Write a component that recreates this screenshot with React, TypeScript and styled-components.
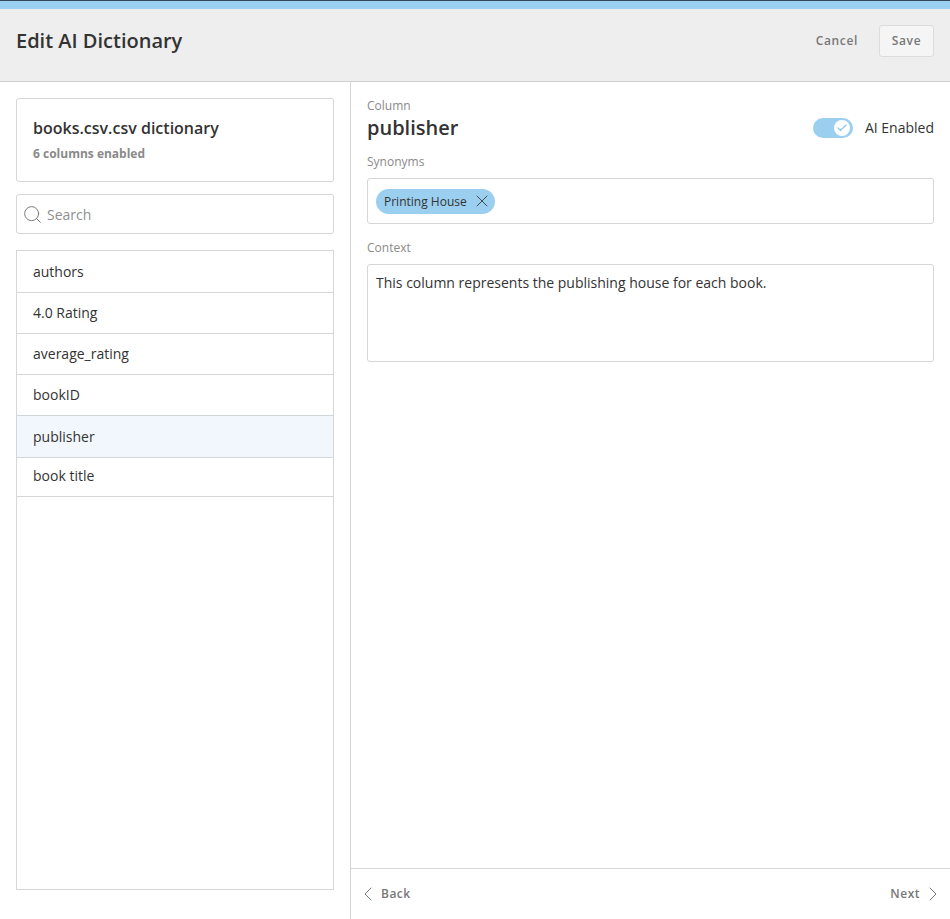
import { Check, ChevronLeft, ChevronRight, Search, X } from "lucide-react";
import styled, { createGlobalStyle } from "styled-components";

const GlobalStyle = createGlobalStyle`
  html, body {
    margin: 0;
    padding: 0;
    background: #ffffff;
  }
  * {
    box-sizing: border-box;
  }
`;

const Page = styled.div`
  width: 950px;
  height: 919px;
  display: flex;
  flex-direction: column;
  font-family: "Open Sans", sans-serif;
  color: #2d2d2d;
  overflow: hidden;
`;

const TopStrip = styled.div`
  height: 9px;
  flex: none;
  background: #9bcfef;
  border-top: 1px solid #33475b;
`;

const Header = styled.header`
  height: 73px;
  flex: none;
  display: flex;
  align-items: center;
  justify-content: space-between;
  padding: 0 16px 8px;
  background: #eeeeee;
  border-bottom: 1px solid #cfcfcf;
`;

const Title = styled.h1`
  margin: 0 0 2px;
  font-size: 20px;
  font-weight: 600;
  line-height: 27px;
  color: #333333;
`;

const HeaderActions = styled.div`
  display: flex;
  align-items: center;
  gap: 21px;
`;

const TextButton = styled.span`
  margin-bottom: 2px;
  font-size: 12px;
  font-weight: 600;
  letter-spacing: 0.65px;
  color: #787878;
`;

const SaveButton = styled.button`
  width: 55px;
  height: 32px;
  padding: 0 0 2px;
  font-family: inherit;
  font-size: 12px;
  font-weight: 600;
  letter-spacing: 0.65px;
  color: #787878;
  background: #f5f5f5;
  border: 1px solid #dcdcdc;
  border-radius: 3px;
`;

const Body = styled.div`
  flex: 1;
  min-height: 0;
  display: flex;
`;

const Sidebar = styled.aside`
  width: 351px;
  flex: none;
  display: flex;
  flex-direction: column;
  padding: 16px 16px 29px;
  border-right: 1px solid #d4d4d4;
`;

const SummaryCard = styled.div`
  width: 318px;
  height: 84px;
  flex: none;
  padding: 18px 16px 0;
  border: 1px solid #d6d6d6;
  border-radius: 3px;
`;

const SummaryTitle = styled.div`
  font-size: 16px;
  font-weight: 600;
  line-height: 22px;
  color: #333333;
`;

const SummaryCount = styled.div`
  margin-top: 7px;
  font-size: 12px;
  font-weight: 700;
  line-height: 16px;
  color: #8a8a8a;
`;

const SearchBox = styled.div`
  width: 318px;
  height: 40px;
  flex: none;
  margin-top: 12px;
  display: flex;
  align-items: center;
  gap: 4px;
  padding-left: 5px;
  border: 1px solid #d6d6d6;
  border-radius: 3px;
  font-size: 14px;
  color: #8f8f8f;
  svg {
    color: #777777;
  }
`;

const ColumnList = styled.ul`
  width: 318px;
  flex: 1;
  margin: 16px 0 0;
  padding: 0;
  list-style: none;
  border: 1px solid #d6d6d6;
  border-top: none;
`;

const ColumnRow = styled.li<{ $active?: boolean; $height: number; $lift: number }>`
  height: ${(p) => p.$height}px;
  display: flex;
  align-items: center;
  padding: 0 0 ${(p) => p.$lift}px 16px;
  font-size: 14px;
  color: #333333;
  border-top: ${(p) => (p.$active ? "1px solid #d0d5da" : "1px solid #d6d6d6")};
  background: ${(p) => (p.$active ? "#f2f7fd" : "#ffffff")};
  &:last-child {
    border-bottom: 1px solid #d6d6d6;
  }
`;

const Detail = styled.main`
  flex: 1;
  min-width: 0;
  display: flex;
  flex-direction: column;
`;

const DetailContent = styled.div`
  flex: 1;
  padding: 16px 16px 0;
`;

const FieldLabel = styled.div`
  font-size: 12px;
  line-height: 16px;
  color: #8a8a8a;
`;

const ColumnHead = styled.div`
  display: flex;
  align-items: center;
  justify-content: space-between;
  height: 28px;
  margin-bottom: 12px;
`;

const ColumnName = styled.div`
  font-size: 20px;
  font-weight: 600;
  line-height: 28px;
  color: #333333;
`;

const ToggleWrap = styled.div`
  display: flex;
  align-items: center;
  gap: 12px;
  font-size: 14px;
  line-height: 18px;
  color: #333333;
`;

const Toggle = styled.div`
  width: 40px;
  height: 20px;
  display: flex;
  align-items: center;
  justify-content: flex-end;
  padding-right: 3px;
  background: #9bcfef;
  border-radius: 10px;
`;

const ToggleKnob = styled.div`
  width: 16px;
  height: 16px;
  display: flex;
  align-items: center;
  justify-content: center;
  background: #ffffff;
  border-radius: 50%;
  color: #8fc8ee;
`;

const SynonymBox = styled.div`
  height: 46px;
  margin: 8px 0 16px;
  display: flex;
  align-items: center;
  padding-left: 8px;
  border: 1px solid #d6d6d6;
  border-radius: 3px;
`;

const Chip = styled.span`
  width: 119px;
  height: 25px;
  display: flex;
  align-items: center;
  gap: 5px;
  padding: 0 0 0 8px;
  background: #9bcfef;
  border-radius: 13px;
  font-size: 12px;
  color: #333333;
`;

const ContextBox = styled.div`
  height: 98px;
  margin-top: 8px;
  padding: 8px;
  border: 1px solid #d6d6d6;
  border-radius: 3px;
  font-size: 14px;
  line-height: 20px;
  color: #333333;
`;

const Footer = styled.footer`
  height: 51px;
  flex: none;
  display: flex;
  align-items: center;
  justify-content: space-between;
  padding: 0 5px;
  border-top: 1px solid #d6d6d6;
`;

const NavButton = styled.span`
  display: flex;
  align-items: center;
  gap: 1px;
  font-size: 12px;
  font-weight: 600;
  letter-spacing: 0.5px;
  color: #787878;
  svg {
    color: #777777;
  }
`;

const NavLabel = styled.span`
  margin-bottom: 2px;
`;

const columns = [
  { name: "authors", height: 42, lift: 0 },
  { name: "4.0 Rating", height: 41, lift: 1 },
  { name: "average_rating", height: 41, lift: 1 },
  { name: "bookID", height: 41, lift: 1 },
  { name: "publisher", height: 42, lift: 0, active: true },
  { name: "book title", height: 40, lift: 3 },
];

export default function App() {
  return (
    <Page>
      <GlobalStyle />
      <TopStrip />
      <Header>
        <Title>Edit AI Dictionary</Title>
        <HeaderActions>
          <TextButton>Cancel</TextButton>
          <SaveButton>Save</SaveButton>
        </HeaderActions>
      </Header>
      <Body>
        <Sidebar>
          <SummaryCard>
            <SummaryTitle>books.csv.csv dictionary</SummaryTitle>
            <SummaryCount>6 columns enabled</SummaryCount>
          </SummaryCard>
          <SearchBox>
            <Search size={21} strokeWidth={1.1} />
            Search
          </SearchBox>
          <ColumnList>
            {columns.map((c) => (
              <ColumnRow key={c.name} $active={c.active} $height={c.height} $lift={c.lift}>
                {c.name}
              </ColumnRow>
            ))}
          </ColumnList>
        </Sidebar>
        <Detail>
          <DetailContent>
            <FieldLabel>Column</FieldLabel>
            <ColumnHead>
              <ColumnName>publisher</ColumnName>
              <ToggleWrap>
                <Toggle>
                  <ToggleKnob>
                    <Check size={12} strokeWidth={2.5} />
                  </ToggleKnob>
                </Toggle>
                AI Enabled
              </ToggleWrap>
            </ColumnHead>
            <FieldLabel>Synonyms</FieldLabel>
            <SynonymBox>
              <Chip>
                Printing House
                <X size={20} strokeWidth={1} />
              </Chip>
            </SynonymBox>
            <FieldLabel>Context</FieldLabel>
            <ContextBox>This column represents the publishing house for each book.</ContextBox>
          </DetailContent>
          <Footer>
            <NavButton>
              <ChevronLeft size={24} strokeWidth={1} />
              <NavLabel>Back</NavLabel>
            </NavButton>
            <NavButton>
              <NavLabel>Next</NavLabel>
              <ChevronRight size={24} strokeWidth={1} />
            </NavButton>
          </Footer>
        </Detail>
      </Body>
    </Page>
  );
}
